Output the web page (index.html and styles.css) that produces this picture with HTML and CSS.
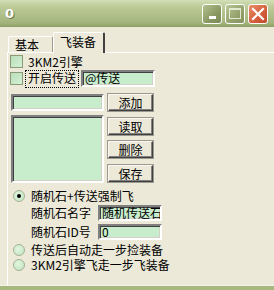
FILE: index.html
```html
<!DOCTYPE html>
<html lang="zh-CN">
<head>
    <meta charset="UTF-8">
    <title>0</title>
    <link rel="stylesheet" href="styles.css">
</head>
<body>
    <div class="window">
        <div class="titlebar">
            <span class="title">0</span>
            <div class="caption-buttons">
                <span class="cap-btn cap-min"><i></i></span>
                <span class="cap-btn cap-max"><i></i></span>
                <span class="cap-btn cap-close">
                    <svg width="14" height="14" viewBox="0 0 14 14"><path d="M2 2 L12 12 M12 2 L2 12" stroke="#fff" stroke-width="2.2" stroke-linecap="square"/></svg>
                </span>
            </div>
        </div>

        <div class="client">
            <div class="tabs">
                <div class="tab">基本</div>
                <div class="tab active">飞装备</div>
            </div>

            <div class="panel">
                <div class="row row-check1">
                    <span class="checkbox"></span>
                    <span class="label">3KM2引擎</span>
                </div>

                <div class="row row-check2">
                    <span class="checkbox"></span>
                    <span class="label focus">开启传送</span>
                    <div class="edit edit-send">@传送</div>
                </div>

                <div class="list-area">
                    <div class="list-left">
                        <div class="edit edit-add"></div>
                        <div class="listbox"></div>
                    </div>
                    <div class="list-buttons">
                        <button class="btn">添加</button>
                        <button class="btn">读取</button>
                        <button class="btn">删除</button>
                        <button class="btn">保存</button>
                    </div>
                </div>

                <div class="row row-radio1">
                    <span class="radio checked"></span>
                    <span class="label">随机石+传送强制飞</span>
                </div>

                <div class="row field-row field1">
                    <span class="field-label">随机石名字</span>
                    <div class="edit edit-field">随机传送石</div>
                </div>
                <div class="row field-row field2">
                    <span class="field-label">随机石ID号</span>
                    <div class="edit edit-field">0</div>
                </div>

                <div class="row row-radio row-radio3">
                    <span class="radio"></span>
                    <span class="label">传送后自动走一步捡装备</span>
                </div>
                <div class="row row-radio">
                    <span class="radio"></span>
                    <span class="label">3KM2引擎飞走一步飞装备</span>
                </div>
            </div>
        </div>
    </div>
</body>
</html>
```

FILE: styles.css
```css
:root {
    --face: #ECE9D8;
    --edit-bg: #C7EDCC;
    --dark: #404040;
    --shadow: #808080;
    --light: #ffffff;
    --frame: #A7B87F;
}

* {
    margin: 0;
    padding: 0;
    box-sizing: border-box;
}

body {
    font-family: "Noto Sans CJK SC", "DejaVu Sans", sans-serif;
    font-size: 12px;
    line-height: 14px;
    color: #000;
    background: var(--face);
}

.window {
    width: 274px;
    height: 290px;
    display: flex;
    flex-direction: column;
    background: var(--face);
    border-bottom: 4px solid var(--frame);
    overflow: hidden;
}

/* title bar */
.titlebar {
    height: 27px;
    flex: none;
    display: flex;
    align-items: center;
    justify-content: space-between;
    padding: 0 5px 0 5px;
    background: linear-gradient(to bottom, #D3DEB6 0%, #BCCB98 25%, #AEBE89 60%, #A2B47B 85%, #8E9F65 100%);
}

.title {
    font-family: "DejaVu Sans", sans-serif;
    font-weight: bold;
    font-size: 13px;
    color: #fff;
    text-shadow: 1px 1px 0 #6B7A47;
}

.caption-buttons {
    display: flex;
    gap: 3px;
    margin-right: 1px;
}

.cap-btn {
    width: 20px;
    height: 20px;
    border: 1px solid #fff;
    border-radius: 3px;
    display: flex;
    align-items: center;
    justify-content: center;
}

.cap-min {
    background: linear-gradient(135deg, #B4C08E, #8A9863 60%, #7A8855);
}

.cap-min i {
    width: 7px;
    height: 3px;
    background: #fff;
    margin-top: 8px;
}

.cap-max {
    background: linear-gradient(135deg, #B9C595, #95A26E 60%, #84925E);
}

.cap-max i {
    width: 12px;
    height: 11px;
    border: 1px solid #E3E9CF;
    border-top-width: 2px;
}

.cap-close {
    background: linear-gradient(135deg, #E9906C, #D5603C 55%, #C04A2A);
}

/* client area */
.client {
    flex: 1;
    display: flex;
    flex-direction: column;
    padding-left: 7px;
    border-bottom: 1px solid #F4F2E8;
}

.tabs {
    display: flex;
    align-items: flex-end;
    padding-left: 1px;
    margin-top: 5px;
    height: 20px;
}

.tab {
    height: 16px;
    padding: 1px 0 0 6px;
    width: 45px;
    border: 1px solid var(--light);
    border-bottom: none;
    border-right: 1px solid #9E9B8C;
    border-radius: 2px 2px 0 0;
    background: var(--face);
}

.tab.active {
    width: 52px;
    height: 21px;
    margin-bottom: -1px;
    padding: 2px 0 0 6px;
    border-right: 2px solid var(--dark);
    position: relative;
    z-index: 1;
}

.panel {
    flex: 1;
    border-top: 1px solid var(--light);
    border-left: 1px solid var(--light);
    padding-left: 2px;
}

.row {
    display: flex;
    align-items: center;
}

.row-check1 {
    margin-top: 2px;
    height: 13px;
}

.row-check2 {
    margin-top: 2px;
    height: 17px;
}

.checkbox {
    width: 13px;
    height: 13px;
    flex: none;
    border: 1px solid #8C9A75;
    background: linear-gradient(135deg, #B9DEB9, #D4F1D6);
}

.label {
    margin-left: 5px;
    white-space: nowrap;
}

.focus {
    margin-left: 3px;
    padding: 0 2px;
    height: 16px;
    line-height: 14px;
    outline: 1px dotted #000;
}

.edit {
    background: var(--edit-bg);
    border: 2px solid;
    border-color: var(--shadow) var(--light) var(--light) var(--shadow);
    box-shadow: inset 1px 1px 0 var(--dark), inset -1px -1px 0 #D4D0C8;
    padding: 0 2px;
    line-height: 12px;
    white-space: nowrap;
    overflow: hidden;
}

.edit-send {
    margin-left: 3px;
    width: 74px;
    height: 17px;
}

.list-area {
    display: flex;
    margin-top: 7px;
    padding-left: 1px;
}

.list-left {
    display: flex;
    flex-direction: column;
    gap: 4px;
}

.edit-add {
    width: 93px;
    height: 17px;
}

.listbox {
    width: 93px;
    height: 68px;
    background: var(--edit-bg);
    border: 2px solid;
    border-color: var(--shadow) var(--light) var(--light) var(--shadow);
    box-shadow: inset 1px 1px 0 var(--dark), inset -1px -1px 0 #D4D0C8;
}

.list-buttons {
    display: flex;
    flex-direction: column;
    margin-left: 4px;
}

.btn {
    width: 45px;
    height: 17px;
    font-family: inherit;
    font-size: 12px;
    line-height: 13px;
    background: var(--face);
    border: 1px solid;
    border-color: #F8F7F0 var(--dark) var(--dark) #F8F7F0;
    box-shadow: inset -1px -1px 0 var(--shadow);
    outline: 1px solid #9C9A8E;
}

.btn + .btn {
    margin-top: 6px;
}

.btn:nth-child(2),
.btn:nth-child(4) {
    margin-top: 7px;
}

.row-radio1 {
    margin-top: 6px;
    height: 14px;
}

.radio {
    width: 12px;
    height: 12px;
    flex: none;
    margin-left: 3px;
    border-radius: 50%;
    border: 1px solid #A6B197;
    background: radial-gradient(circle at 40% 40%, #E2F5E1, #BEE3BD);
    display: flex;
    align-items: center;
    justify-content: center;
}

.radio.checked::after {
    content: "";
    width: 4px;
    height: 4px;
    border-radius: 50%;
    background: #000;
}

.radio + .label {
    margin-left: 6px;
}

.field-row {
    padding-left: 21px;
}

.field1 {
    margin-top: 2px;
    height: 16px;
}

.field2 {
    margin-top: 3px;
    height: 16px;
}

.field-label {
    width: 67px;
    white-space: nowrap;
}

.edit-field {
    width: 64px;
    height: 16px;
}

.row-radio {
    height: 14px;
}

.row-radio3 {
    margin-top: 3px;
}

.row-radio3 + .row-radio {
    margin-top: 1px;
}
```
